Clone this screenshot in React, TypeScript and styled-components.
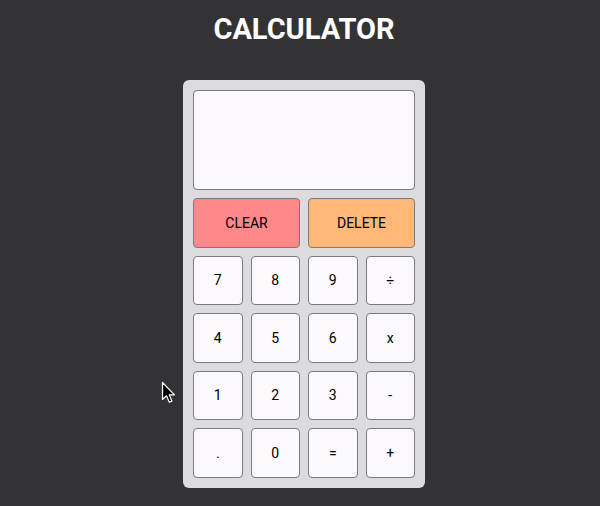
import React from "react";
import styled, { createGlobalStyle } from "styled-components";

const GlobalStyle = createGlobalStyle`
  html, body {
    margin: 0;
    padding: 0;
    background: #333234;
  }
  body {
    font-family: Roboto, "Liberation Sans", Arial, sans-serif;
  }
`;

const Page = styled.div`
  position: relative;
  min-height: 506px;
  box-sizing: border-box;
  padding-left: 8px;
  display: flex;
  flex-direction: column;
  align-items: center;
`;

const Title = styled.h1`
  margin: 12px 0 34px;
  font-family: Roboto, "Liberation Sans", sans-serif;
  font-weight: 700;
  font-size: 29px;
  line-height: 34px;
  color: #ffffff;
  letter-spacing: 0;
`;

const Calculator = styled.div`
  width: 242px;
  box-sizing: border-box;
  padding: 10px;
  background: #dcdbdd;
  border-radius: 6px;
  display: flex;
  flex-direction: column;
  gap: 8px;
`;

const Display = styled.div`
  height: 100px;
  box-sizing: border-box;
  background: #fbf9fc;
  border: 1px solid #7b7a7c;
  border-radius: 4px;
`;

const TopRow = styled.div`
  display: grid;
  grid-template-columns: 1fr 1fr;
  gap: 8px;
`;

const Keys = styled.div`
  display: grid;
  grid-template-columns: repeat(4, 1fr);
  gap: 8px;
`;

const Key = styled.button<{ $bg?: string }>`
  box-sizing: border-box;
  height: 49.5px;
  margin: 0;
  padding: 0;
  background: ${(p) => p.$bg ?? "#fbf9fc"};
  border: 1px solid #7b7a7c;
  border-radius: 4px;
  font-family: Roboto, "Liberation Sans", Arial, sans-serif;
  font-size: 14px;
  color: #000;
  cursor: pointer;
`;

const Cursor = styled.svg`
  position: absolute;
  left: 161px;
  top: 381px;
`;

const keys = ["7", "8", "9", "÷", "4", "5", "6", "x", "1", "2", "3", "-", ".", "0", "=", "+"];

export default function App() {
  return (
    <>
      <GlobalStyle />
      <Page>
        <Title>CALCULATOR</Title>
        <Calculator>
          <Display />
          <TopRow>
            <Key $bg="#ff898a">CLEAR</Key>
            <Key $bg="#ffb878">DELETE</Key>
          </TopRow>
          <Keys>
            {keys.map((k) => (
              <Key key={k}>{k}</Key>
            ))}
          </Keys>
        </Calculator>
        <Cursor width="16" height="24" viewBox="0 0 16 24">
          <path
            d="M1.5 1.5 L1.5 18.5 L5.5 14.8 L8.3 21.2 L10.9 20.1 L8.2 13.8 L13.5 13.8 Z"
            fill="#000"
            stroke="#fff"
            strokeWidth="1.2"
            strokeLinejoin="round"
          />
        </Cursor>
      </Page>
    </>
  );
}
